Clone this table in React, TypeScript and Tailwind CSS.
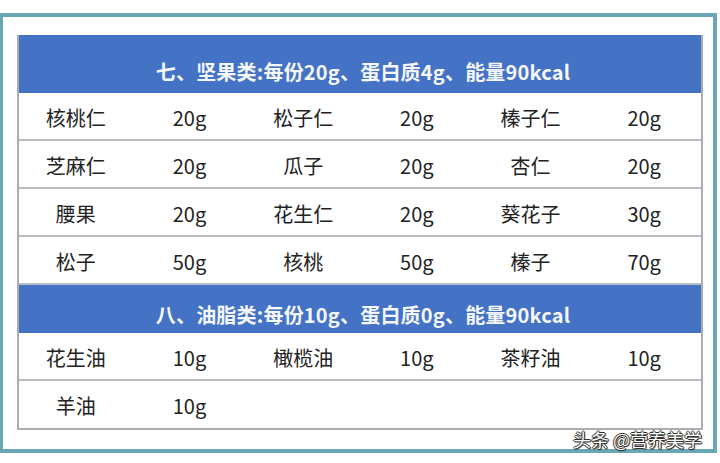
import React from "react";

const font = { fontFamily: '"Noto Sans CJK SC", "Noto Sans", sans-serif' };

type Cell = string;
const nuts: Cell[][] = [
  ["核桃仁", "20g", "松子仁", "20g", "榛子仁", "20g"],
  ["芝麻仁", "20g", "瓜子", "20g", "杏仁", "20g"],
  ["腰果", "20g", "花生仁", "20g", "葵花子", "30g"],
  ["松子", "50g", "核桃", "50g", "榛子", "70g"],
];
const oils: Cell[][] = [
  ["花生油", "10g", "橄榄油", "10g", "茶籽油", "10g"],
  ["羊油", "10g", "", "", "", ""],
];

function Row({ cells, last }: { cells: Cell[]; last?: boolean }) {
  return (
    <div
      className={
        last
          ? "grid grid-cols-6 h-[47px] items-center pt-[3px]"
          : "grid grid-cols-6 h-[48px] items-center pt-[3px] border-b-2 border-[#b9bdc1]"
      }
    >
      {cells.map((c, i) => (
        <div key={i} className="text-center text-[20px] leading-none text-[#222222]">
          {c}
        </div>
      ))}
    </div>
  );
}

export default function App() {
  return (
    <div className="w-[720px] h-[463px] bg-white relative overflow-hidden" style={font}>
      <div className="pt-[13px]">
        <div className="w-[717px] h-[440px] border-t-4 border-l-[3px] border-r-4 border-b-4 border-[#68a7b3] pl-[14px] pt-[18px]">
          <div className="w-[686px] border-l-2 border-r-2 border-b-2 border-[#a9adb1]">
            <div className="h-[58px] bg-[#4472c4] flex items-center justify-center pt-4 pl-[6px] text-[#f4f7fc] font-bold text-[20px] leading-none tracking-[0.2px]">
              七、坚果类:每份20g、蛋白质4g、能量90kcal
            </div>
            {nuts.map((r, i) => (
              <Row key={i} cells={r} />
            ))}
            <div className="h-[48px] bg-[#4472c4] flex items-center justify-center pt-3 pl-[6px] text-[#f4f7fc] font-bold text-[20px] leading-none tracking-[0.2px]">
              八、油脂类:每份10g、蛋白质0g、能量90kcal
            </div>
            {oils.map((r, i) => (
              <Row key={i} cells={r} last={i === oils.length - 1} />
            ))}
          </div>
        </div>
      </div>
      <div className="absolute left-[573px] top-[430px] text-[18px] leading-none text-white [text-shadow:1px_0_0_#333,-1px_0_0_#333,0_1px_0_#333,0_-1px_0_#333,1px_1px_1px_#333]">
        头条 @营养美学
      </div>
    </div>
  );
}
